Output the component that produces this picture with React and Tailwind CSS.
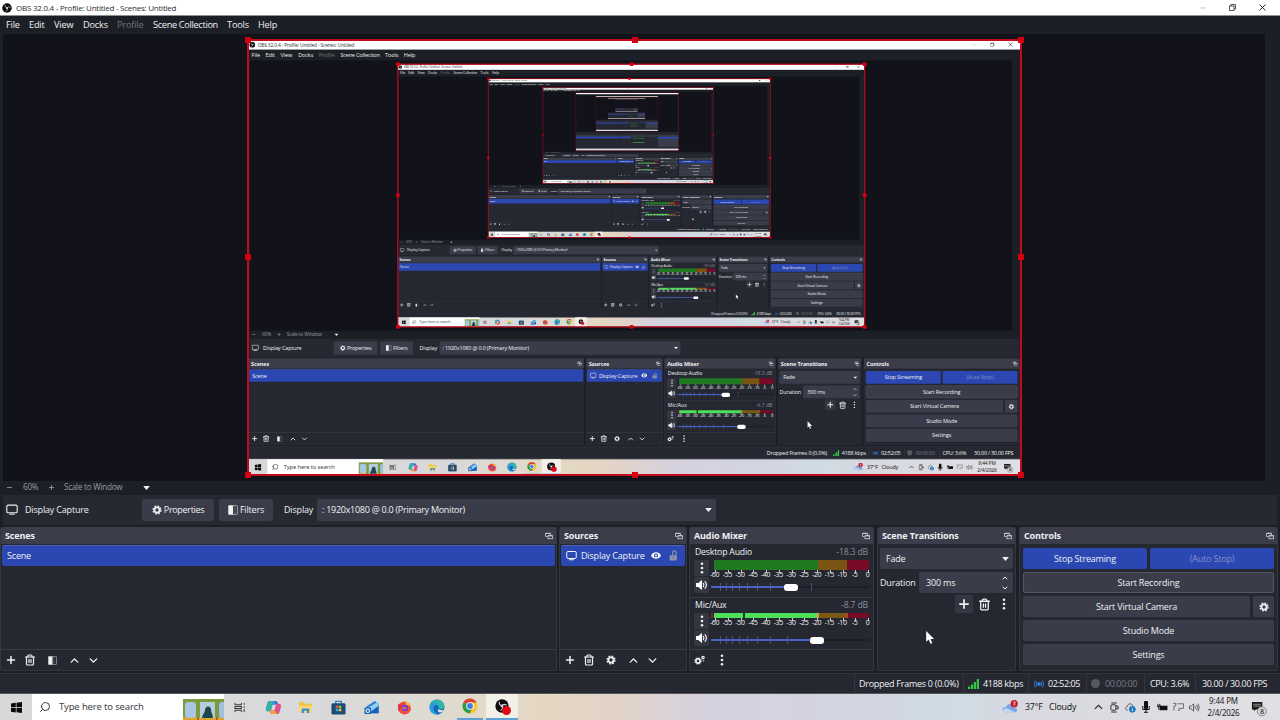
import React from 'react';
import { Minus, X, Plus, ChevronUp, ChevronDown, Search, Trash2 } from 'lucide-react';

// full screens are drawn down to this level, plain blocks below it
const FULL_DEPTH = 4;
const MAX_DEPTH = 8;

const MENU = [
  { label: 'File', cls: 'w-[23px]' },
  { label: 'Edit', cls: 'w-[25px]' },
  { label: 'View', cls: 'w-[29px]' },
  { label: 'Docks', cls: 'w-[34px]' },
  { label: 'Profile', cls: 'w-[36px] text-[#74757c]' },
  { label: 'Scene Collection', cls: 'w-[74px] tracking-[-0.035em]' },
  { label: 'Tools', cls: 'w-[31px]' },
  { label: 'Help', cls: 'w-[30px]' },
];

const DB_MARKS = ['-60', '-55', '-50', '-45', '-40', '-35', '-30', '-25', '-20', '-15', '-10', '-5', '0'];

/* ---------- icons ---------- */

const ObsLogo = ({ className }) => (
  <svg viewBox="0 0 20 20" className={className}>
    <circle cx="10" cy="10" r="9.5" fill="#0c0c0e" />
    <g fill="none" stroke="#d8d8da" strokeWidth="1.5" strokeLinecap="round">
      <path d="M6.2 4.2c-.6 3 .8 5.2 3.8 5.6" />
      <path d="M16.2 8.6c-2.6-1.6-5.2-1-6.2 1.2" />
      <path d="M8.2 16c2.8-1 3.6-3.6 1.8-6.2" />
    </g>
    <circle cx="10" cy="10" r="2" fill="#d8d8da" />
  </svg>
);

const Gear = ({ className }) => (
  <svg viewBox="0 0 20 20" className={className} fill="none" stroke="currentColor">
    <circle cx="10" cy="10" r="5.2" strokeWidth="3.6" />
    <circle cx="10" cy="10" r="7.9" strokeWidth="2.6" strokeDasharray="3.6 2.6" />
  </svg>
);

const Gears = ({ className }) => (
  <svg viewBox="0 0 24 20" className={className} fill="none" stroke="currentColor">
    <circle cx="8" cy="12" r="4.2" strokeWidth="3.4" />
    <circle cx="8" cy="12" r="6.4" strokeWidth="2" strokeDasharray="2.8 2.2" />
    <circle cx="18" cy="5" r="2.4" strokeWidth="2.4" />
    <circle cx="19" cy="11.5" r="1" strokeWidth="1.4" />
  </svg>
);

const MonitorIcon = ({ className }) => (
  <svg viewBox="0 0 22 20" className={className} fill="none" stroke="currentColor" strokeWidth="2">
    <rect x="1.5" y="2" width="19" height="14" rx="2.4" />
    <path d="M6 18.5h10" />
  </svg>
);

const FilterIcon = ({ className }) => (
  <svg viewBox="0 0 20 20" className={className}>
    <rect x="1" y="1" width="18" height="18" rx="1.5" fill="none" stroke="currentColor" strokeWidth="1.4" opacity=".7" />
    <rect x="1" y="1" width="9" height="18" fill="currentColor" />
    <path d="M12 2v16M15 2v16" stroke="currentColor" strokeWidth="1" strokeDasharray="1.5 1.5" opacity=".5" />
  </svg>
);

const PopOut = () => (
  <svg viewBox="0 0 16 16" className="h-[8px] w-[8px]" fill="none" stroke="#cfcfd6" strokeWidth="1.6">
    <path d="M5 9H1V3h10v3" />
    <path d="M1 2.600h10" strokeWidth="2" />
    <rect x="6" y="7.500" width="9" height="6" />
    <path d="M6 7.500h9" strokeWidth="2" />
  </svg>
);

const Dots = ({ className }) => (
  <svg viewBox="0 0 4 14" className={className} fill="currentColor">
    <circle cx="2" cy="2" r="1.5" />
    <circle cx="2" cy="7" r="1.5" />
    <circle cx="2" cy="12" r="1.5" />
  </svg>
);

const Caret = () => (
  <svg viewBox="0 0 10 6" className="h-[4px] w-[7px] shrink-0" fill="#f4f4f6">
    <path d="M0 0h10L5 6z" />
  </svg>
);

const Speaker = () => (
  <svg viewBox="0 0 20 16" className="h-[10px] w-[12px]" fill="none" stroke="#fff" strokeWidth="1.8" strokeLinecap="round">
    <path d="M1 5.5h3.5L9 1.5v13L4.5 10.5H1z" fill="#fff" />
    <path d="M12 5c1.4 2 1.4 4 0 6M15 2.5c3 3.5 3 7.5 0 11" />
  </svg>
);

const Eye = () => (
  <svg viewBox="0 0 22 16" className="h-[9px] w-[10px]">
    <path d="M0 8C5-1.5 17-1.5 22 8 17 17.5 5 17.5 0 8z" fill="#fff" />
    <circle cx="11" cy="8" r="4.6" fill="#2a45ad" />
    <circle cx="11" cy="8" r="2.2" fill="#fff" />
  </svg>
);

const Unlock = () => (
  <svg viewBox="0 0 16 20" className="h-[11px] w-[9px]">
    <rect x="1" y="9.5" width="13" height="9.5" rx="1" fill="#8f95aa" />
    <path d="M6.5 10V5c0-4.5 6-4.5 6 0v5" fill="none" stroke="#8f95aa" strokeWidth="2" />
    <path d="M7.5 12v4" stroke="#55609a" strokeWidth="1.5" />
  </svg>
);

/* ---------- top of the window ---------- */

const TitleBar = () => (
  <div className="flex h-[16px] shrink-0 items-center justify-between border-b border-[#8d9093] bg-white pl-[2px] pr-[12px] text-[#2c3035]">
    <div className="flex items-center gap-[4px]">
      <ObsLogo className="h-[10px] w-[10px]" />
      <span className="text-[8px] tracking-[-0.03em]">OBS 32.0.4 - Profile: Untitled - Scenes: Untitled</span>
    </div>
    <div className="flex items-center">
      <Minus className="h-[8px] w-[8px] text-[#a5a5a5]" strokeWidth={2} />
      <svg viewBox="0 0 14 14" className="ml-[22px] h-[7px] w-[7px]" fill="none" stroke="#222" strokeWidth="1.5">
        <rect x="1" y="4" width="9" height="9" />
        <path d="M4 4V1h9v9h-3" />
      </svg>
      <X className="ml-[21px] h-[11px] w-[11px] text-[#222]" strokeWidth={2} />
    </div>
  </div>
);

const MenuBar = () => (
  <div className="flex h-[18px] shrink-0 items-center pl-[6px] text-[9.2px]">
    {MENU.map((m) => (
      <span key={m.label} className={`shrink-0 whitespace-nowrap ${m.cls}`}>{m.label}</span>
    ))}
  </div>
);

/* ---------- preview ---------- */

const Handle = ({ className }) => <i className={`absolute h-[6px] w-[6px] bg-[#d4000f] ${className}`} />;

const Preview = ({ depth }) => (
  <div className="flex h-[447px] shrink-0 pl-[3px] pr-[15px]">
    <div className="flex-1 bg-[#11121a] pl-[245px] pt-[6px]">
      <div className="relative h-[435px] w-[773px] bg-[#11121a]">
        {depth < MAX_DEPTH && (
          <div className="h-[435px] w-[773px] overflow-hidden">
            <div className="h-[720px] w-[1280px] origin-top-left scale-[0.604]">
              {depth < FULL_DEPTH ? <Screen depth={depth + 1} /> : <BlockScreen depth={depth + 1} />}
            </div>
          </div>
        )}
        <div className="absolute inset-[-1px] border-2 border-[#c20a1c]" />
        <Handle className="left-[-3px] top-[-3px]" />
        <Handle className="left-[384px] top-[-3px]" />
        <Handle className="right-[-3px] top-[-3px]" />
        <Handle className="left-[-3px] top-[214px]" />
        <Handle className="right-[-3px] top-[214px]" />
        <Handle className="bottom-[-3px] left-[-3px]" />
        <Handle className="bottom-[-3px] left-[384px]" />
        <Handle className="bottom-[-3px] right-[-3px]" />
      </div>
    </div>
  </div>
);

const ZoomBar = () => (
  <div className="flex h-[14px] shrink-0 items-center pb-[2px] pl-[6px] pt-px text-[8.1px] tracking-[-0.03em] text-[#989aa2]">
    <Minus className="h-[7px] w-[7px]" strokeWidth={3} />
    <span className="ml-[10px] w-[25px] whitespace-nowrap">60%</span>
    <Plus className="h-[7px] w-[7px]" strokeWidth={3} />
    <span className="ml-[9px] w-[79px] whitespace-nowrap">Scale to Window</span>
    <Caret />
  </div>
);

const SourceToolbar = () => (
  <div className="mx-[3px] flex h-[30px] shrink-0 items-center bg-[#262932] pb-px pl-[3px]">
    <MonitorIcon className="h-[11px] w-[12px]" />
    <span className="ml-[7px] w-[117px]">Display Capture</span>
    <button className="flex h-[22px] w-[72px] items-center justify-center gap-[2px] rounded-[2px] bg-[#3a3c49] tracking-[-0.035em]">
      <Gear className="h-[10px] w-[10px]" />
      Properties
    </button>
    <button className="ml-[5px] flex h-[22px] w-[54px] items-center justify-center gap-[2px] rounded-[2px] bg-[#3a3c49]">
      <FilterIcon className="h-[10px] w-[10px]" />
      Filters
    </button>
    <span className="ml-[11px] w-[33px]">Display</span>
    <div className="flex h-[22px] w-[399px] items-center justify-between rounded-[2px] bg-[#3a3c49] pl-[5px] pr-[4px]">
      <span className="tracking-[-0.03em]">: 1920x1080 @ 0.0 (Primary Monitor)</span>
      <Caret />
    </div>
  </div>
);

/* ---------- docks ---------- */

const Dock = ({ title, className, children }) => (
  <section className={`flex h-[144px] shrink-0 flex-col rounded-[2px] border border-t-0 border-[#343640] bg-[#252831] ${className}`}>
    <header className="flex h-[17px] shrink-0 items-center justify-between rounded-t-[2px] bg-[#3b3d4a] pl-[4px] pr-[3px] font-bold">
      <span className="tracking-[-0.015em]">{title}</span>
      <PopOut />
    </header>
    {children}
  </section>
);

const ListToolbar = ({ middle }) => (
  <div className="flex h-[21px] shrink-0 items-center border-t border-[#3a3c46] pl-[4px]">
    <Plus className="h-[12px] w-[12px]" strokeWidth={3} />
    <Trash2 className="ml-[6.5px] h-[12px] w-[12px]" strokeWidth={2.4} />
    <span className="ml-[11.5px] flex w-[10px] justify-center">{middle}</span>
    <ChevronUp className="ml-[11px] h-[13px] w-[13px]" strokeWidth={2.6} />
    <ChevronDown className="ml-[6px] h-[13px] w-[13px]" strokeWidth={2.6} />
  </div>
);

const Scenes = () => (
  <Dock title="Scenes" className="w-[557px]">
    <div className="flex-1 px-px pt-px">
      <div className="flex h-[21px] items-center rounded-[2px] border-t border-[#4b62b8] bg-[#2a47b2] pb-px pl-[5px]">Scene</div>
    </div>
    <ListToolbar middle={<FilterIcon className="h-[9px] w-[9px]" />} />
  </Dock>
);

const Sources = () => (
  <Dock title="Sources" className="ml-[2px] w-[128px]">
    <div className="flex-1 px-px pt-px">
      <div className="flex h-[21px] items-center rounded-[2px] border-t border-[#4b62b8] bg-[#2a47b2] pb-px pl-[5px]">
        <MonitorIcon className="h-[11px] w-[11px]" />
        <span className="ml-[4px] w-[70px] whitespace-nowrap">Display Capture</span>
        <Eye />
        <span className="ml-[8px]"><Unlock /></span>
      </div>
    </div>
    <ListToolbar middle={<Gear className="h-[10px] w-[10px]" />} />
  </Dock>
);

const Scale = () => (
  <div className="flex h-[8px] w-[162px] justify-between text-[7px] leading-[9px]">
    {DB_MARKS.map((m) => (
      <span key={m} className="relative flex w-[9px] flex-col items-center tracking-[-0.06em]">
        <i className="absolute left-[5px] top-0 h-[3px] w-px bg-[#c8c8ce]" />
        {m}
      </span>
    ))}
  </div>
);

const Slider = ({ value, ticks }) => (
  <div className="relative flex h-[8px] w-[158px] items-center">
    <div className="h-[2px] w-full bg-[#1d1f27]" />
    {ticks.map((t) => (
      <i key={t} className="absolute top-0 h-[8px] w-px bg-[#4d5472]" style={{ left: t }} />
    ))}
    <div className="absolute left-0 h-[2px] bg-[#4a63c4]" style={{ width: value }} />
    <div className="absolute h-[7px] w-[14px] rounded-[3px] bg-white" style={{ left: value - 6.5 }} />
  </div>
);

const DesktopMeter = () => (
  <div className="ml-[3px] flex h-[10px] w-[155px]">
    <div className="w-[104px] bg-[#1f7a22]" />
    <div className="w-[29px] bg-[#7a5412]" />
    <div className="flex-1 bg-[#790a26]" />
  </div>
);

const MicMeter = () => (
  <div className="flex h-[5px] w-[158px]">
    <div className="w-[2px] bg-[#8c1f2f]" />
    <div className="w-px" />
    <div className="w-[29px] bg-[#4de05a]" />
    <div className="w-[2px] bg-[#14451a]" />
    <div className="w-[72px] bg-[#4de05a]" />
    <div className="w-[2px] bg-[#e09a55]" />
    <div className="w-[27px] bg-[#7a5a12]" />
    <div className="w-[2px] bg-[#b04430]" />
    <div className="flex-1 bg-[#790a26]" />
  </div>
);

const Channel = ({ name, level, meter, sliderGap, value, ticks }) => (
  <div className="h-[53px] shrink-0 border-b border-[#3a3c46] px-[4px]">
    <div className="flex h-[15px] items-center justify-between px-px text-[8.7px]">
      <span>{name}</span>
      <span className="text-[#8b8d96]">{level}</span>
    </div>
    <div className="flex">
      <div className="flex w-[15px] shrink-0 flex-col gap-px">
        <div className="flex h-[16px] items-center justify-center rounded-[2px] bg-[#343641]">
          <Dots className="h-[12px] w-[4px]" />
        </div>
        <div className="flex h-[16px] items-center justify-center rounded-[2px] bg-[#343641]">
          <Speaker />
        </div>
      </div>
      <div className="ml-[2px] w-[158px] shrink-0">
        {meter}
        <div className="-ml-px"><Scale /></div>
        <div className={sliderGap}><Slider value={value} ticks={ticks} /></div>
      </div>
    </div>
  </div>
);

const AudioMixer = ({ micLevel }) => (
  <Dock title="Audio Mixer" className="ml-[2px] w-[185px]">
    <div className="flex-1 overflow-hidden pt-px">
      <Channel
        name="Desktop Audio"
        level="-18.3 dB"
        meter={<DesktopMeter />}
        sliderGap="pt-[5px]"
        value={79}
        ticks={[9, 15, 21, 28, 36, 46, 59, 100]}
      />
      <Channel
        name="Mic/Aux"
        level={micLevel}
        meter={<MicMeter />}
        sliderGap="pt-[10px]"
        value={105}
        ticks={[9, 15, 21, 28, 36, 46, 59, 76]}
      />
    </div>
    <div className="flex h-[21px] shrink-0 items-center border-t border-[#3a3c46] pl-[4px]">
      <Gears className="h-[10px] w-[12px]" />
      <Dots className="ml-[14px] h-[12px] w-[4px]" />
    </div>
  </Dock>
);

const Transitions = () => (
  <Dock title="Scene Transitions" className="ml-[3px] w-[139px]">
    <div className="flex flex-col gap-[3px] px-[2px] pt-[4px]">
      <div className="flex h-[21px] items-center justify-between rounded-[2px] bg-[#3a3c49] pl-[6px] pr-[4px]">
        Fade
        <Caret />
      </div>
      <div className="flex items-center justify-between">
        <span>Duration</span>
        <div className="flex h-[21px] w-[94px] items-center justify-between rounded-[2px] bg-[#3a3c49] pl-[7px] pr-[4px]">
          300 ms
          <span className="flex flex-col gap-[2px]">
            <ChevronUp className="h-[8px] w-[8px]" strokeWidth={3} />
            <ChevronDown className="h-[8px] w-[8px]" strokeWidth={3} />
          </span>
        </div>
      </div>
      <div className="-mt-px flex h-[18px] items-center justify-end pr-[7px]">
        <div className="flex h-[18px] w-[18px] items-center justify-center rounded-[2px] bg-[#343641]">
          <Plus className="h-[14px] w-[14px]" strokeWidth={3} />
        </div>
        <Trash2 className="ml-[5px] h-[13px] w-[13px]" strokeWidth={2.4} />
        <Dots className="ml-[11px] h-[12px] w-[4px]" />
      </div>
    </div>
  </Dock>
);

const CtlButton = ({ className = 'bg-[#3a3c49]', children }) => (
  <button className={`flex h-[21px] items-center justify-center rounded-[2px] ${className}`}>{children}</button>
);

const Controls = () => (
  <Dock title="Controls" className="ml-[3px] w-[259px]">
    <div className="flex flex-col gap-[3px] pl-[3px] pr-[3px] pt-[4px]">
      <div className="flex gap-[3px]">
        <CtlButton className="flex-1 bg-[#2a47b2]">Stop Streaming</CtlButton>
        <CtlButton className="flex-1 bg-[#2a47b2] text-[#8390cb]">(Auto Stop)</CtlButton>
      </div>
      <CtlButton className="border border-[#555763] bg-[#3a3c49]">Start Recording</CtlButton>
      <div className="flex gap-[3px]">
        <CtlButton className="flex-1 bg-[#3a3c49]">Start Virtual Camera</CtlButton>
        <CtlButton className="w-[21px] bg-[#3a3c49]"><Gear className="h-[10px] w-[10px]" /></CtlButton>
      </div>
      <CtlButton>Studio Mode</CtlButton>
      <CtlButton>Settings</CtlButton>
    </div>
  </Dock>
);

/* ---------- status bar ---------- */

const StatusBar = () => (
  <div className="flex h-[20px] shrink-0 items-center justify-end whitespace-nowrap border-t border-[#343640] bg-[#252831]">
    <div className="flex h-full w-[109px] items-center border-l border-[#343640] pl-[4px] tracking-[-0.03em]">Dropped Frames 0 (0.0%)</div>
    <div className="flex h-full w-[65px] items-center gap-[4px] border-l border-[#343640] pl-[4px]">
      <svg viewBox="0 0 11 10" className="h-[10px] w-[11px] shrink-0" fill="#35c545">
        <path d="M0 7.5h2.2V10H0zM2.9 5.5h2.2V10H2.9zM5.8 3H8v7H5.8zM8.7 0H11v10H8.7z" />
      </svg>
      <span className="tracking-[-0.035em]">4188 kbps</span>
    </div>
    <div className="flex h-full w-[58px] items-center gap-[4px] border-l border-[#343640] pl-[5px] tracking-[-0.05em]">
      <svg viewBox="0 0 12 10" className="h-[8px] w-[10px] shrink-0" fill="none" stroke="#2b6fb5" strokeWidth="1.3">
        <circle cx="6" cy="5" r="1.8" fill="#3b8fe0" />
        <path d="M3.5 2Q1.8 5 3.5 8M8.5 2Q10.2 5 8.5 8M1.5.5Q-.8 5 1.5 9.5M10.5.5Q12.8 5 10.5 9.5" />
      </svg>
      02:52:05
    </div>
    <div className="flex h-full w-[58px] items-center gap-[5px] border-l border-[#343640] pl-[4px] tracking-[-0.05em] text-[#777983]">
      <i className="h-[9px] w-[9px] rounded-full bg-[#555761]" />
      00:00:00
    </div>
    <div className="flex h-full w-[51px] items-center border-l border-[#343640] pl-[5px] tracking-[-0.04em]">CPU: 3.6%</div>
    <div className="flex h-full w-[85px] items-center border-l border-[#343640] pl-[6px] tracking-[-0.04em]">30.00 / 30.00 FPS</div>
  </div>
);

/* ---------- windows taskbar ---------- */

const SearchArt = () => (
  <svg viewBox="0 0 41 21" className="h-[21px] w-[41px]">
    <rect width="41" height="21" fill="#7d9a3c" />
    <rect y="18" width="41" height="3" fill="#e0a32c" />
    <rect x="2" y="3" width="11" height="16" rx="3" fill="#a9c7e2" />
    <rect x="17" y="3" width="15" height="16" rx="1" fill="#b4cbe0" />
    <path d="M19 19c1-5 3-5 3-8 0-4 5-5 6-1 0 4 2 5 2 9z" fill="#1d4a48" />
    <rect x="36" y="3" width="7" height="16" rx="3" fill="#9fc0e0" />
    <path d="M15 18v3M34 18v3" stroke="#8b5a2a" strokeWidth="1.5" />
  </svg>
);

const TaskView = () => (
  <svg viewBox="0 0 12 12" className="h-[11px] w-[12px]" fill="none" stroke="#2a2a2a" strokeWidth="1">
    <path d="M.5 1v2h7V1M.5 11V9h7v2" />
    <rect x=".5" y="4.8" width="7" height="2.4" />
    <path d="M10.5 1v2M10.5 4.5v1.8M10.5 7.5V11" />
  </svg>
);

const Copilot = () => (
  <svg viewBox="0 0 18 16" className="h-[15px] w-[17px]">
    <path d="M5 1h6c2 0 2 2 1.5 4H8L6 12H3C0 12 1 8 2 5s1-4 3-4z" fill="#2a8fdc" />
    <path d="M5 1h4L6 12H3c-2 0-2-3-1-6z" fill="#35b4a0" />
    <path d="M13 15H7c-2 0-2-2-1.5-4H10l2-7h3c3 0 2 4 1 7s-1 4-3 4z" fill="#e0508c" />
    <path d="M13 15H7c-2 0-2-2-1.5-4H10z" fill="#f2a23a" />
    <path d="M11 1c2 0 2 1 3 3h-2.5z" fill="#6a4fd6" />
  </svg>
);

const Explorer = () => (
  <svg viewBox="0 0 16 14" className="h-[13px] w-[15px]">
    <path d="M1 1h5l1.5 2H15v9H1z" fill="#f3c545" />
    <path d="M1 5h14v7H1z" fill="#f8d974" />
    <path d="M4 13V8h8v5h-2.5v-2.5h-3V13z" fill="#3d8ed0" />
  </svg>
);

const Store = () => (
  <svg viewBox="0 0 16 16" className="h-[15px] w-[15px]">
    <path d="M5 4V1.5h6V4" fill="none" stroke="#2783c4" strokeWidth="1.4" />
    <rect x=".5" y="3.5" width="15" height="12" rx="1.5" fill="#1c4a78" />
    <path d="M5 6h2.7v2.7H5z" fill="#f0592b" />
    <path d="M8.3 6H11v2.7H8.3z" fill="#8bc53f" />
    <path d="M5 9.3h2.7V12H5z" fill="#35a8e8" />
    <path d="M8.3 9.3H11V12H8.3z" fill="#fbc52d" />
  </svg>
);

const Outlook = () => (
  <svg viewBox="0 0 16 16" className="h-[15px] w-[16px]">
    <path d="M2 7l9-6 4 3v10H3z" fill="#2a7fd6" />
    <path d="M4 8l10-6 1 5-8 5z" fill="#8fd0f5" />
    <path d="M15 6v8H5z" fill="#1a5dbb" />
    <rect x="0" y="8" width="7" height="7" rx="1" fill="#1664b8" />
    <circle cx="3.5" cy="11.5" r="1.8" fill="none" stroke="#fff" strokeWidth="1.1" />
  </svg>
);

const Firefox = () => (
  <svg viewBox="0 0 16 16" className="h-[15px] w-[15px]">
    <circle cx="8" cy="8.5" r="7" fill="#f0503c" />
    <path d="M9 1c3 1 6 4 6 8-1-3-3-4-5-4z" fill="#fbc535" />
    <path d="M1.5 4c1 1 3 0 5 1l-4 7C1 10 .5 7 1.5 4z" fill="#e0304f" />
    <circle cx="8.5" cy="8.5" r="3.4" fill="#7c3fc4" />
    <path d="M5 8c2 1 3-1 5 0-1 2-3 2.5-5 0z" fill="#f98a2a" />
  </svg>
);

const Edge = () => (
  <svg viewBox="0 0 16 16" className="h-[16px] w-[16px]">
    <circle cx="8" cy="8" r="7.5" fill="#1668b5" />
    <path d="M.6 8C1-1 14-2 15.5 7c0 3-4 4-6 3 1-2 0-4-2.5-4C4 6 1 6 .6 8z" fill="#2fb8a8" />
    <path d="M.6 8c1-5 7-6 8.5-2C5 5 3 9 5.5 12.5 7 15 10 15 11 15 5 17 0 13 .6 8z" fill="#2a9ce0" />
    <path d="M9.5 10c1 1.5 4 1.5 5.5.5-.8 1.8-2 3-3.5 3-2 0-3.5-1.5-2-3.5z" fill="#dfe2e6" />
  </svg>
);

const Chrome = () => (
  <svg viewBox="0 0 16 16" className="h-[16px] w-[16px]">
    <circle cx="8" cy="8" r="7.5" fill="#f9c52a" />
    <path d="M8 8L1.5 4.2A7.5 7.5 0 0114.5 4.5H8z" fill="#dc4535" />
    <path d="M1.5 4.2A7.5 7.5 0 007.5 15.5L11 9.5 8 8z" fill="#2c9b4b" />
    <circle cx="8" cy="8" r="3.8" fill="#fff" />
    <circle cx="8" cy="8" r="2.9" fill="#3f7fe0" />
  </svg>
);

const TaskIcon = ({ className = 'w-[32.8px]', children }) => (
  <div className={`flex h-full shrink-0 items-center justify-center ${className}`}>{children}</div>
);

const Tray = () => (
  <div className="flex h-full shrink-0 items-center text-[#222]">
    <svg viewBox="0 0 18 15" className="h-[14px] w-[17px]">
      <path d="M3 13c-4-1-3-6 1-5 1-5 8-5 9 0 4 0 4 5 1 5z" fill="#7ea6e4" />
      <path d="M3 13c-3-1-2-4 1-4 4 0 5 3 11 4z" fill="#c4d8f6" />
      <circle cx="13" cy="4" r="3.9" fill="#c81e2c" />
      <path d="M12 2.3h2l-1 1.3c1.5.3 1 2-1 1.7" fill="none" stroke="#fff" strokeWidth=".8" />
    </svg>
    <span className="ml-[6px] w-[24px] text-[8.8px]">37°F</span>
    <span className="w-[45px] text-[8.8px]">Cloudy</span>
    <svg viewBox="0 0 10 6" className="h-[6px] w-[9px] shrink-0" fill="none" stroke="#222" strokeWidth="1.2">
      <path d="M1 5.2L5 1.2l4 4" />
    </svg>
    <svg viewBox="0 0 10 12" className="ml-[7px] h-[11px] w-[9px]" fill="none" stroke="#222">
      <path d="M1.5 1h6M1.5 11h6" />
      <rect x="1" y="3" width="5.5" height="6" rx="1" />
      <path d="M6.5 4.5h2.5v3H6.5" />
    </svg>
    <svg viewBox="0 0 12 12" className="ml-[6px] h-[11px] w-[11px]">
      <path d="M3 9C0 9 0 5 2.5 5 3 1 8 1 8.5 4.5" fill="none" stroke="#555" />
      <circle cx="8" cy="8" r="3.6" fill="#1a78c4" />
      <path d="M8 6v.8M8 7.5v2.5" stroke="#fff" />
    </svg>
    <svg viewBox="0 0 8 12" className="ml-[6px] h-[12px] w-[8px]">
      <rect x="2" y="0" width="4" height="8" rx="1" fill="#111" />
      <path d="M.8 5v3.5h6.4V5M4 8.5V11M2 11.3h4" fill="none" stroke="#111" />
    </svg>
    <svg viewBox="0 0 12 10" className="ml-[7px] h-[9px] w-[11px]">
      <rect x="3" y="3" width="8.5" height="5" fill="#111" />
      <path d="M1 1v4M3 1v3M0 3.5h4M2 4v4" stroke="#111" />
    </svg>
    <svg viewBox="0 0 12 10" className="ml-[5px] h-[10px] w-[11px]" fill="none" stroke="#666">
      <path d="M4.5 1.500h7v5H6M0 1h3v3H1v5M5 8.5h3" />
    </svg>
    <svg viewBox="0 0 12 10" className="ml-[5px] h-[9px] w-[11px]" fill="none" stroke="#444" strokeWidth=".9">
      <path d="M.5 3.5h1.8L5 1v8L2.3 6.5H.5zM6.5 3.5q1 1.5 0 3M8.3 2q2 3 0 6M10 .8q2.5 4.2 0 8.4" />
    </svg>
    <div className="flex w-[46px] flex-col items-center pl-px text-[8px] leading-[12px]">
      <span>9:44 PM</span>
      <span>2/4/2026</span>
    </div>
    <svg viewBox="0 0 17 17" className="ml-[5px] mt-[4px] h-[16px] w-[16px]">
      <path d="M1 1h11v8H5l-2 2V9H1z" fill="#1a1a1a" />
      <path d="M2.5 3.5h8M2.5 5.5h8" stroke="#ccc" strokeWidth=".7" />
      <circle cx="11.5" cy="11" r="4.8" fill="#d5d5d9" stroke="#777" strokeWidth=".8" />
      <text x="11.5" y="13.7" fontSize="7.5" textAnchor="middle" fill="#111">8</text>
    </svg>
  </div>
);

const Taskbar = () => (
  <div className="flex h-[27px] shrink-0 justify-between border-t border-[#55565c] bg-[linear-gradient(90deg,#d9d8dc_0%,#d9d8da_25%,#dedbd2_33%,#e4d8c2_42%,#e2d3c8_48%,#d5d2de_55%,#d3d5e2_68%,#cfdce4_74%,#d8d8e0_80%,#e0e0e4_100%)] pr-[13px] font-['Noto_Sans',sans-serif]">
    <div className="flex h-full">
      <div className="flex h-full w-[32px] items-center justify-center bg-[#d8d8d9]">
        <svg viewBox="0 0 11 11" className="h-[11px] w-[11px]" fill="#0a0a0a">
          <path d="M0 1.5l4.8-.7v4.5H0zM5.5.7L11 0v5.3H5.5zM0 6h4.8v4.5L0 9.8zM5.5 6H11v5l-5.5-.7z" />
        </svg>
      </div>
      <div className="flex h-full w-[192px] items-center bg-white pl-[7px]">
        <Search className="h-[12px] w-[12px] -scale-x-100 text-[#222]" strokeWidth={1.8} />
        <span className="ml-[8px] w-[124px] text-[9.5px] tracking-[-0.015em] text-[#44464a]">Type here to search</span>
        <div className="flex h-full items-end"><SearchArt /></div>
      </div>
      <TaskIcon><TaskView /></TaskIcon>
      <TaskIcon><Copilot /></TaskIcon>
      <TaskIcon><Explorer /></TaskIcon>
      <TaskIcon><Store /></TaskIcon>
      <TaskIcon><Outlook /></TaskIcon>
      <TaskIcon><Firefox /></TaskIcon>
      <TaskIcon><Edge /></TaskIcon>
      <TaskIcon className="mx-[3.4px] w-[26px] border-b-2 border-[#5fa0d6]"><Chrome /></TaskIcon>
      <TaskIcon className="relative w-[32px] border-b-2 border-[#5fa0d6] bg-[#f3f0ea]">
        <ObsLogo className="h-[14px] w-[14px]" />
        <i className="absolute left-[16px] top-[12px] h-[9px] w-[9px] rounded-full bg-[#e0091a]" />
      </TaskIcon>
    </div>
    <Tray />
  </div>
);

/* Same proportions as Screen, without labels, for the innermost levels */
const BlockScreen = ({ depth }) => (
  <div className="flex h-[720px] w-[1280px] flex-col overflow-hidden bg-[#1d1f26]">
    <div className="h-[16px] shrink-0 bg-white" />
    <div className="h-[18px] shrink-0" />
    <Preview depth={depth} />
    <div className="mx-[3px] mt-[14px] h-[30px] shrink-0 bg-[#262932]" />
    <div className="mt-[2px] flex h-[145px] shrink-0 gap-[3px]">
      <div className="w-[556px] border-t-[18px] border-[#3b3d4a] bg-[#252831]"><div className="h-[21px] bg-[#2a47b2]" /></div>
      <div className="w-[127px] border-t-[18px] border-[#3b3d4a] bg-[#252831]"><div className="h-[21px] bg-[#2a47b2]" /></div>
      <div className="w-[185px] border-t-[18px] border-[#3b3d4a] bg-[#252831] px-[20px] pt-[15px]">
        <div className="h-[10px] bg-[#1f7a22]" />
        <div className="mt-[42px] h-[6px] bg-[#4de05a]" />
      </div>
      <div className="w-[139px] border-t-[18px] border-[#3b3d4a] bg-[#252831]" />
      <div className="w-[258px] border-t-[18px] border-[#3b3d4a] bg-[#3a3c49] pt-[3px]"><div className="h-[21px] bg-[#2a47b2]" /></div>
    </div>
    <div className="h-[21px] shrink-0 bg-[#252831]" />
    <div className="flex-1 bg-[#dcdae0]" />
  </div>
);

/* One full desktop; the preview draws the next one inside itself */
const Screen = ({ depth }) => (
  <div className="relative flex h-[720px] w-[1280px] flex-col overflow-hidden bg-[#1d1f26] font-['Open_Sans',sans-serif] text-[9px] leading-none tracking-[-0.02em] text-[#f0f0f3]">
    <TitleBar />
    <MenuBar />
    <Preview depth={depth} />
    <ZoomBar />
    <SourceToolbar />
    <div className="flex h-[147px] shrink-0 pt-[2px]">
      <Scenes />
      <Sources />
      <AudioMixer micLevel={depth === 0 ? '-8.7 dB' : '-6.7 dB'} />
      <Transitions />
      <Controls />
    </div>
    <div className="h-px shrink-0" />
    <StatusBar />
    <Taskbar />
    <svg viewBox="0 0 12 18" className="absolute left-[926px] top-[631px] h-[13px] w-[9px]">
      <path d="M0 0v15l3.5-3.3L6 17.5l2.5-1L6 11h5z" fill="#fff" />
    </svg>
  </div>
);

export default function App() {
  return <Screen depth={0} />;
}
